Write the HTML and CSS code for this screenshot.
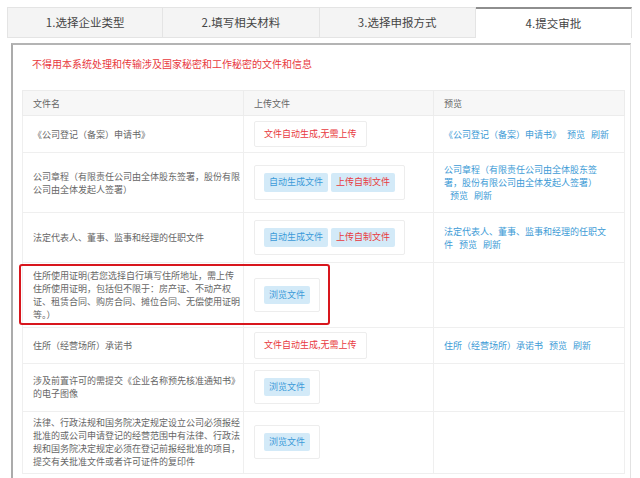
FILE: index.html
```html
<!DOCTYPE html>
<html lang="zh-CN">
<head>
<meta charset="utf-8">
<title>提交审批</title>
<link rel="stylesheet" href="styles.css">
</head>
<body>
<div class="page">
  <div class="tabs">
    <div class="tab">1.选择企业类型</div>
    <div class="tab">2.填写相关材料</div>
    <div class="tab">3.选择申报方式</div>
    <div class="tab active">4.提交审批</div>
  </div>
  <div class="panel">
    <p class="warn">不得用本系统处理和传输涉及国家秘密和工作秘密的文件和信息</p>
    <table class="files">
      <colgroup><col class="c1"><col class="c2"><col class="c3"></colgroup>
      <thead>
        <tr><th class="name">文件名</th><th class="up">上传文件</th><th class="pv">预览</th></tr>
      </thead>
      <tbody>
        <tr class="r1">
          <td class="name">《公司登记（备案）申请书》</td>
          <td class="up"><span class="box auto">文件自动生成,无需上传</span></td>
          <td class="pv"><span class="lnk">《公司登记（备案）申请书》</span><span class="lnk gap">预览</span><span class="lnk gap">刷新</span></td>
        </tr>
        <tr class="r2">
          <td class="name">公司章程（有限责任公司由全体股东签署，股份有限公司由全体发起人签署）</td>
          <td class="up"><span class="box btns"><span class="btn">自动生成文件</span><span class="btn red">上传自制文件</span></span></td>
          <td class="pv"><span class="lnk">公司章程（有限责任公司由全体股东签署，股份有限公司由全体发起人签署）</span><span class="lnk gap">预览</span><span class="lnk gap">刷新</span></td>
        </tr>
        <tr class="r3">
          <td class="name">法定代表人、董事、监事和经理的任职文件</td>
          <td class="up"><span class="box btns"><span class="btn">自动生成文件</span><span class="btn red">上传自制文件</span></span></td>
          <td class="pv"><span class="lnk">法定代表人、董事、监事和经理的任职文件</span><span class="lnk gap">预览</span><span class="lnk gap">刷新</span></td>
        </tr>
        <tr class="r4">
          <td class="name hl">住所使用证明(若您选择自行填写住所地址，需上传住所使用证明，包括但不限于：房产证、不动产权证、租赁合同、购房合同、摊位合同、无偿使用证明等。）</td>
          <td class="up"><span class="box btns"><span class="btn">浏览文件</span></span></td>
          <td class="pv"></td>
        </tr>
        <tr class="r5">
          <td class="name">住所（经营场所）承诺书</td>
          <td class="up"><span class="box auto">文件自动生成,无需上传</span></td>
          <td class="pv"><span class="lnk">住所（经营场所）承诺书</span><span class="lnk gap">预览</span><span class="lnk gap">刷新</span></td>
        </tr>
        <tr class="r6">
          <td class="name">涉及前置许可的需提交《企业名称预先核准通知书》的电子图像</td>
          <td class="up"><span class="box btns"><span class="btn">浏览文件</span></span></td>
          <td class="pv"></td>
        </tr>
        <tr class="r7">
          <td class="name">法律、行政法规和国务院决定规定设立公司必须报经批准的或公司申请登记的经营范围中有法律、行政法规和国务院决定规定必须在登记前报经批准的项目，提交有关批准文件或者许可证件的复印件</td>
          <td class="up"><span class="box btns"><span class="btn">浏览文件</span></span></td>
          <td class="pv"></td>
        </tr>
      </tbody>
    </table>
  </div>
</div>
</body>
</html>
```

FILE: styles.css
```css
* { box-sizing: border-box; }
html, body { margin: 0; padding: 0; background: #fff; }
body {
  font-family: "Noto Sans CJK SC", "Noto Sans", "Liberation Sans", sans-serif;
  color: #666;
  overflow: hidden;
}
.page {
  padding: 7px 8px 0 7px;
}
.tabs {
  display: grid;
  grid-template-columns: repeat(4, 1fr);
  width: 625px;
  height: 31px;
}
.tab {
  background: #f4f4f4;
  border: 1px solid #e4e4e4;
  border-left: none;
  color: #444;
  font-size: 11.5px;
  line-height: 29px;
  text-align: center;
}
.tab:first-child { border-left: 1px solid #e4e4e4; }
.tab.active {
  background: #fff;
  border-top: 2px solid #8e8e8e;
  border-bottom: none;
  line-height: 28px;
}
.panel {
  margin: 5px 0 0 4px;
  width: 620px;
  height: 440px;
  border-top: 2px solid #b4b4b4;
  border-left: 2px solid #ababab;
  border-right: 1px solid #e2e2e2;
  padding: 0 5px 0 9px;
}
.warn {
  margin: 13px 0 20px 10px;
  font-size: 10px;
  line-height: 12px;
  color: #e8393e;
}
.files {
  width: 602px;
  table-layout: fixed;
  border-collapse: collapse;
  border: 1px solid #ececec;
  font-size: 9px;
  line-height: 13px;
}
.c1 { width: 221px; }
.c2 { width: 190px; }
.c3 { width: 191px; }
.files th {
  height: 25px;
  background: #f7f7f7;
  font-weight: normal;
  text-align: left;
  color: #666;
  border: 1px solid #ececec;
  padding: 0 10px;
}
.files td {
  border: 1px solid #efefef;
  vertical-align: middle;
  padding: 4px 10px;
  color: #666;
}
.files td.name { padding-right: 3px; }
.files td.pv { padding-right: 13px; }
.r1 { height: 37px; }
.r2 { height: 60px; }
.r3 { height: 50px; }
.r4 { height: 65px; }
.r5 { height: 33px; }
.r6 { height: 48px; }
.r7 { height: 62px; }
.box {
  display: inline-flex;
  gap: 3px;
  border: 1px solid #ededed;
  border-radius: 2px;
  background: #fff;
  line-height: 12.5px;
}
.box.auto {
  padding: 6px 9px;
  color: #e8393e;
}
.box.btns {
  padding: 7px 9px;
}
.btn {
  display: inline-block;
  padding: 3px 5px;
  background: #d3eaf8;
  color: #3b9ad8;
  border-radius: 2px;
}
.btn.red { color: #e8393e; }
.lnk { color: #3d9bd6; }
.lnk.gap { margin-left: 6px; }
.hl { position: relative; }
.hl::after {
  content: "";
  position: absolute;
  left: -4px;
  top: 1px;
  bottom: 2px;
  width: 307px;
  border: 2px solid #d8161d;
  border-radius: 3px;
  pointer-events: none;
}
```
